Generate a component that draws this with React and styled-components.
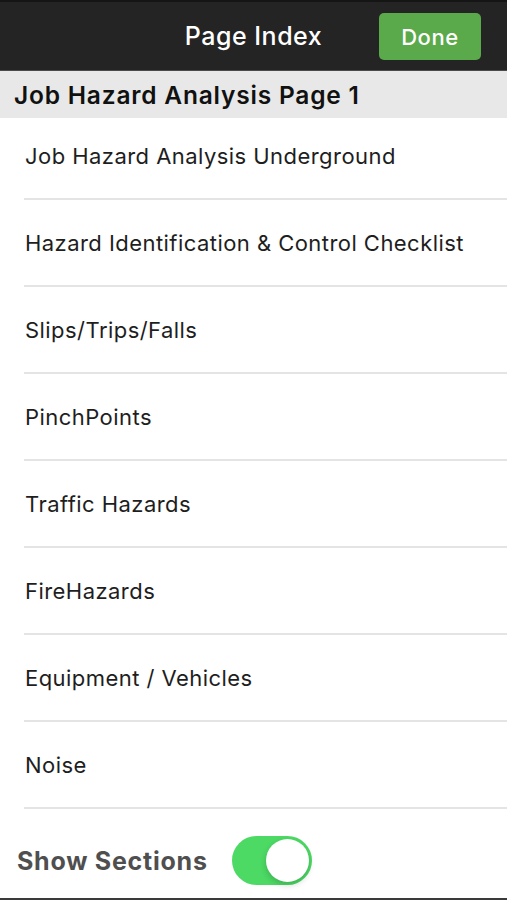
import React, { useState } from 'react';
import styled, { createGlobalStyle } from 'styled-components';

const GlobalStyle = createGlobalStyle`
  html, body {
    margin: 0;
    padding: 0;
    background: #fff;
    font-family: Inter, "Liberation Sans", Arial, sans-serif;
  }
`;

const Screen = styled.div`
  width: 507px;
  height: 900px;
  display: flex;
  flex-direction: column;
  overflow: hidden;
  background: #fff;
  border-bottom: 2px solid #3a3a3a;
  box-sizing: border-box;
`;

const NavBar = styled.header`
  height: 71px;
  flex: none;
  background: #242424;
  border-top: 2px solid #151515;
  border-bottom: 1px solid #4a4a4a;
  display: grid;
  grid-template-columns: 1fr auto 1fr;
  align-items: center;
  padding: 0 26px;
  box-sizing: border-box;
`;

const Title = styled.h1`
  grid-column: 2;
  margin: 0;
  color: #fff;
  font-size: 25px;
  font-weight: 500;
  letter-spacing: 0.5px;
`;

const DoneButton = styled.button`
  grid-column: 3;
  justify-self: end;
  width: 102px;
  height: 47px;
  margin-top: 1px;
  border: none;
  border-radius: 5px;
  background: #5aa94a;
  color: #fff;
  font-family: inherit;
  font-size: 22px;
  font-weight: 500;
  letter-spacing: 0.6px;
  padding: 0;
  cursor: pointer;
`;

const SectionHeader = styled.div`
  height: 47px;
  flex: none;
  background: #e8e8e8;
  display: flex;
  align-items: center;
  padding-left: 14px;
  padding-top: 1px;
  box-sizing: border-box;
  font-size: 24.5px;
  font-weight: 600;
  letter-spacing: 0.8px;
  color: #111;
`;

const List = styled.ul`
  list-style: none;
  margin: 0;
  padding: 0;
  flex: 1;
`;

const Row = styled.li`
  height: ${({ first }) => (first ? 82 : 87)}px;
  margin-left: 24px;
  display: flex;
  align-items: center;
  padding-left: 1px;
  padding-bottom: ${({ first }) => (first ? 4 : 0)}px;
  box-sizing: border-box;
  border-bottom: 2px solid #e4e4e4;
  font-size: 22px;
  letter-spacing: 0.45px;
  color: #1e1e1e;
`;

const Footer = styled.div`
  height: 87px;
  flex: none;
  display: flex;
  align-items: center;
  gap: 24px;
  padding-left: 17px;
  padding-top: 12px;
  box-sizing: border-box;
`;

const FooterLabel = styled.span`
  font-size: 25px;
  font-weight: 700;
  letter-spacing: 0.75px;
  color: #4f4f4f;
`;

const Toggle = styled.button`
  position: relative;
  width: 80px;
  height: 49px;
  border: none;
  border-radius: 25px;
  background: ${({ on }) => (on ? '#4cd964' : '#e5e5e5')};
  padding: 0;
  cursor: pointer;
`;

const Knob = styled.span`
  position: absolute;
  top: 3px;
  left: ${({ on }) => (on ? 34 : 3)}px;
  width: 43px;
  height: 43px;
  border-radius: 50%;
  background: #fff;
  box-shadow: 0 3px 6px rgba(0, 0, 0, 0.18);
`;

const items = [
  'Job Hazard Analysis Underground',
  'Hazard Identification & Control Checklist',
  'Slips/Trips/Falls',
  'PinchPoints',
  'Traffic Hazards',
  'FireHazards',
  'Equipment / Vehicles',
  'Noise',
];

const App = () => {
  const [showSections, setShowSections] = useState(true);

  return (
    <>
      <GlobalStyle />
      <Screen>
        <NavBar>
          <Title>Page Index</Title>
          <DoneButton>Done</DoneButton>
        </NavBar>
        <SectionHeader>Job Hazard Analysis Page 1</SectionHeader>
        <List>
          {items.map((item, i) => (
            <Row key={item} first={i === 0}>
              {item}
            </Row>
          ))}
        </List>
        <Footer>
          <FooterLabel>Show Sections</FooterLabel>
          <Toggle on={showSections} onClick={() => setShowSections(!showSections)}>
            <Knob on={showSections} />
          </Toggle>
        </Footer>
      </Screen>
    </>
  );
};

export default App;
